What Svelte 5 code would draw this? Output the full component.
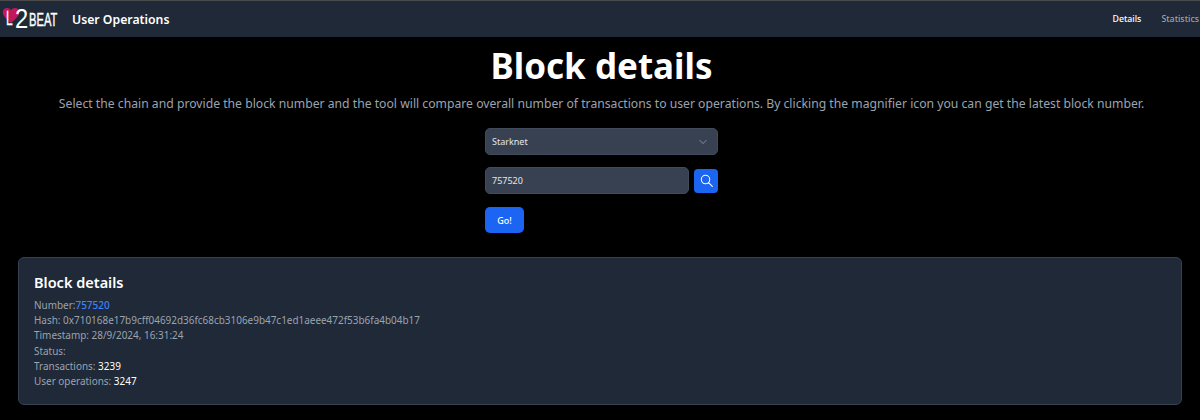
<script lang="ts">
  const rows = [
    { label: "Hash", value: "0x710168e17b9cff04692d36fc68cb3106e9b47c1ed1aeee472f53b6fa4b04b17" },
    { label: "Timestamp", value: "28/9/2024, 16:31:24" },
    { label: "Status", value: "" },
  ];
</script>

<div class="navbar">
  <div class="brand">
    <span class="logo">
      <svg class="heart" viewBox="0 0 24 22" width="18" height="17">
        <path d="M12 21C5 15 1 11 1 6.500C1 3 3.500 1 6.500 1C8.800 1 10.800 2.200 12 4C13.200 2.200 15.200 1 17.500 1C20.500 1 23 3 23 6.500C23 11 19 15 12 21Z" fill="#c2185b" />
      </svg>
      <span class="l">L</span><span class="two">2</span><span class="beat">BEAT</span>
    </span>
    <span class="title">User Operations</span>
  </div>
  <div class="links">
    <span class="active">Details</span>
    <span>Statistics</span>
  </div>
</div>

<main>
  <div class="head">
    <h1>Block details</h1>
    <p class="lead">
      Select the chain and provide the block number and the tool will compare overall number of transactions to user operations. By clicking the magnifier icon you can get the latest block number.
    </p>

    <form class="form">
      <div class="select">
        <span>Starknet</span>
        <svg viewBox="0 0 20 20" width="16" height="16" fill="none" stroke="#6b7280" stroke-width="1.500" stroke-linecap="round" stroke-linejoin="round">
          <path d="M6 8l4 4 4-4" />
        </svg>
      </div>
      <div class="number">
        <div class="input">757520</div>
        <button type="button" class="icon-btn" aria-label="Latest block">
          <svg viewBox="0 0 20 20" width="13" height="13" fill="none" stroke="#fff" stroke-width="1.600" stroke-linecap="round">
            <circle cx="8.500" cy="8.500" r="6.500" />
            <path d="M13.500 13.500L19 19" />
          </svg>
        </button>
      </div>
      <button type="button" class="go">Go!</button>
    </form>
  </div>

  <section class="card">
    <h2>Block details</h2>
    <div class="row">Number:<a href="#757520">757520</a></div>
    {#each rows as r}
      <div class="row">{r.label}: {r.value}</div>
    {/each}
    <div class="row">Transactions: <b>3239</b></div>
    <div class="row">User operations: <b>3247</b></div>
  </section>
</main>

<style>
  :global(body) {
    background: #000;
    font-family: "Noto Sans", sans-serif;
  }
  .navbar {
    height: 37px;
    box-sizing: border-box;
    display: flex;
    align-items: center;
    justify-content: space-between;
    background: #1f2937;
    border-top: 1px solid #4b4b4b;
    overflow: hidden;
  }
  .brand {
    display: flex;
    align-items: center;
    gap: 13px;
  }
  .logo {
    position: relative;
    display: block;
    width: 59px;
    height: 36px;
    margin-top: -1px;
    color: #fff;
    font-family: "Liberation Sans", sans-serif;
    line-height: 1;
  }
  .heart {
    position: absolute;
    left: 2px;
    top: 6px;
  }
  .l, .two, .beat {
    position: absolute;
    transform-origin: left;
  }
  .l {
    left: 6px;
    top: 7px;
    font-size: 20px;
    transform: scaleX(0.6);
    -webkit-text-stroke: 0.3px #fff;
  }
  .two {
    left: 15px;
    top: 4px;
    font-size: 28px;
    transform: scaleX(0.85);
  }
  .beat {
    left: 29px;
    top: 10px;
    font-size: 18px;
    transform: scaleX(0.62);
    -webkit-text-stroke: 0.4px #fff;
  }
  .title {
    font-size: 12.250px;
    font-weight: 600;
    color: #fff;
  }
  .links {
    display: flex;
    gap: 20px;
    font-size: 8.800px;
    font-weight: 500;
    color: #9ca3af;
    margin-right: 1px;
  }
  .links .active {
    color: #fff;
  }
  main {
    display: flex;
    flex-direction: column;
    align-items: center;
  }
  .head {
    box-sizing: border-box;
    width: 100%;
    padding-left: 3px;
    display: flex;
    flex-direction: column;
    align-items: center;
  }
  h1 {
    margin: 1px 0 0;
    font-size: 35px;
    line-height: 56px;
    font-weight: 700;
    color: #fff;
  }
  .lead {
    margin: 0;
    font-size: 12.200px;
    line-height: 20px;
    color: #9ca3af;
    white-space: nowrap;
  }
  .form {
    width: 233px;
    margin-top: 14px;
    display: flex;
    flex-direction: column;
    align-items: flex-start;
  }
  .select, .input {
    box-sizing: border-box;
    height: 27px;
    padding: 0 6px;
    display: flex;
    align-items: center;
    justify-content: space-between;
    background: #374151;
    border: 1px solid #414b5a;
    border-radius: 5px;
    color: #e5e7eb;
    font-size: 9px;
  }
  .select {
    width: 100%;
  }
  .number {
    width: 100%;
    margin-top: 12px;
    display: flex;
    align-items: center;
    gap: 5px;
  }
  .input {
    flex: 1;
  }
  .icon-btn {
    width: 24px;
    height: 24px;
    padding: 0;
    display: flex;
    align-items: center;
    justify-content: center;
    background: #1c64f2;
    border: none;
    border-radius: 4px;
  }
  .go {
    width: 39px;
    height: 26px;
    margin-top: 13px;
    padding: 0;
    background: #1c64f2;
    border: none;
    border-radius: 5px;
    color: #fff;
    font: 500 9px "Noto Sans", sans-serif;
  }
  .card {
    box-sizing: border-box;
    width: 1164px;
    height: 148px;
    margin-top: 24px;
    padding: 13px 15px;
    background: #1f2937;
    border: 1px solid #374151;
    border-radius: 6px;
  }
  h2 {
    margin: 0 0 5px;
    font-size: 14.500px;
    line-height: 22px;
    font-weight: 600;
    color: #fff;
  }
  .row {
    font-size: 9.950px;
    line-height: 15.200px;
    color: #9ca3af;
  }
  .row a {
    color: #3f83f8;
    font-weight: 500;
    text-decoration: none;
  }
  .row b {
    color: #fff;
    font-weight: 400;
  }
</style>
